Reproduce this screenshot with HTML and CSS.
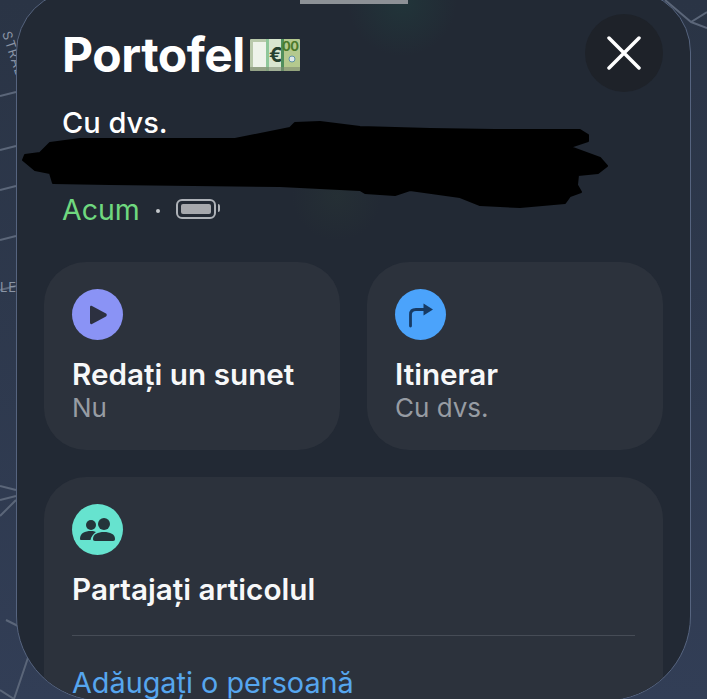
FILE: index.html
```html
<!DOCTYPE html>
<html lang="ro">
<head>
    <meta charset="UTF-8">
    <meta name="viewport" content="width=device-width, initial-scale=1.0">
    <title>Portofel</title>
    <link rel="stylesheet" href="styles.css">
</head>
<body>
    <!-- map behind the sheet -->
    <svg class="map" width="707" height="699" viewBox="0 0 707 699">
        <g fill="none" stroke="#5b6679" stroke-width="2">
            <path d="M0 96L16 92M0 150L16 146M0 190L16 186M0 240L16 236M0 290L16 286"/>
            <path d="M0 486L16 490M0 500L16 496M0 516L16 500M6 620L22 628M34 640L14 699M0 690L14 699"/>
            <path d="M665 0L691 22L707 12M691 22L707 28"/>
        </g>
        <text class="map-label" transform="translate(2 33) rotate(72)">STRAD</text>
        <text class="map-label" x="0" y="292">LE</text>
    </svg>

    <main class="sheet">
        <div class="grabber"></div>

        <header class="sheet-head">
            <div class="head-text">
                <h1 class="title">Portofel
                    <svg class="money" width="50" height="34" viewBox="0 0 50 34">
                        <rect x="0" y="1" width="17" height="32" rx="1" fill="#b9c9ab"/>
                        <rect x="3" y="4" width="13" height="25" fill="#eef3ea"/>
                        <rect x="16" y="1" width="18" height="32" fill="#8fc79a"/>
                        <rect x="19" y="1" width="12" height="32" fill="#d8e6cf"/>
                        <text class="money-sign" x="19" y="24">€</text>
                        <rect x="31" y="1" width="19" height="32" rx="1" fill="#b4c98e"/>
                        <rect x="31" y="1" width="3" height="32" fill="#4f8f5c"/>
                        <text class="money-num" x="32" y="13">00</text>
                        <circle cx="42" cy="21" r="3" fill="#dfe9ea" stroke="#5f93a8"/>
                        <rect x="0" y="29" width="50" height="4" fill="#7d8a70" opacity="0.6"/>
                    </svg>
                </h1>
                <p class="where">Cu dvs.</p>
                <div class="status">
                    <span class="status-now">Acum</span>
                    <span class="status-dot"></span>
                    <span class="battery"><span class="battery-level"></span></span>
                </div>
            </div>
            <button class="close" type="button" aria-label="Închide">
                <svg width="34" height="34" viewBox="0 0 34 34">
                    <path d="M2 2L32 32M32 2L2 32" stroke="#fff" stroke-width="3.500" stroke-linecap="round"/>
                </svg>
            </button>
        </header>

        <section class="actions">
            <div class="card">
                <div class="icon icon-play">
                    <svg width="20" height="20" viewBox="0 0 20 20">
                        <path d="M2 2.2C2 1 3 .5 4 1L18 8.6C19 9.2 19 10.8 18 11.4L4 19C3 19.500 2 19 2 17.800Z" fill="#2c3040"/>
                    </svg>
                </div>
                <div class="card-title">Redați un sunet</div>
                <div class="card-sub">Nu</div>
            </div>
            <div class="card">
                <div class="icon icon-route">
                    <svg width="26" height="26" viewBox="0 0 26 26">
                        <path d="M2.500 24V12.500C2.500 9 4.500 7.500 8 7.500H17" fill="none" stroke="#173a63" stroke-width="2.800" stroke-linecap="round"/>
                        <path d="M15.500 1.500L25 7.500L15.500 13.500Z" fill="#173a63"/>
                    </svg>
                </div>
                <div class="card-title">Itinerar</div>
                <div class="card-sub">Cu dvs.</div>
            </div>
        </section>

        <section class="card share">
            <div class="icon icon-share">
                <svg width="36" height="24" viewBox="0 0 36 24">
                    <circle cx="11" cy="7" r="5" fill="#24343a"/>
                    <path d="M0 21C0 15 5 13 11 13C13 13 15 13.500 16 14C13 16 11 19 10.500 22H2C1 22 0 22 0 21Z" fill="#24343a"/>
                    <circle cx="24" cy="6" r="6" fill="#24343a"/>
                    <path d="M13 21C13 16 18 14 24 14C30 14 35 16 35 21C35 22 34.500 23 33 23H15C13.500 23 13 22 13 21Z" fill="#24343a"/>
                </svg>
            </div>
            <div class="card-title">Partajați articolul</div>
            <hr class="divider">
            <a class="share-add" href="#">Adăugați o persoană</a>
        </section>
    </main>

    <!-- hand-drawn redaction over the address -->
    <svg class="scribble" width="707" height="699" viewBox="0 0 707 699">
        <path d="M23 160L25 155L40 153L50 143L80 139H235L290 128L295 123L320 122L360 127L430 129L495 130L580 130L588 135V141L570 147L600 158L607 166L598 173L578 175L577 185L581 192L570 196L565 203L520 207L480 205L460 197L410 190L395 195L365 193L360 190L280 186L110 184L53 183L50 173L35 170Z" fill="#000" stroke="#000" stroke-width="2" stroke-linejoin="round"/>
    </svg>
</body>
</html>
```

FILE: styles.css
```css
html, body {
    height: 100%;
}
body {
    margin: 0;
    height: 699px;
    position: relative;
    overflow: hidden;
    font-family: 'Inter', 'Liberation Sans', sans-serif;
    background: linear-gradient(to bottom, #2a3445, #323e56);
    color: #fff;
}
.map, .scribble {
    position: absolute;
    left: 0;
    top: 0;
    pointer-events: none;
}
.map-label {
    font-size: 13px;
    letter-spacing: 1px;
    fill: #8a94a5;
}
.sheet {
    position: relative;
    box-sizing: border-box;
    width: 675px;
    height: 711px;
    margin: -10px 0 0 16px;
    padding: 0 27px;
    border: 1px solid #56647f;
    border-radius: 62px 62px 85px 85px;
    background:
        radial-gradient(circle at 385px 10px, rgba(30, 80, 70, 0.3), transparent 55px),
        radial-gradient(circle at 320px 205px, rgba(50, 75, 55, 0.18), transparent 45px),
        #222934;
    overflow: hidden;
}
.grabber {
    position: absolute;
    left: 283px;
    top: 9px;
    width: 108px;
    height: 4px;
    background: #8d9196;
}
.sheet-head {
    display: flex;
    justify-content: space-between;
    align-items: flex-start;
    height: 271px;
    padding: 33px 0 0 18px;
    box-sizing: border-box;
}
.title {
    display: flex;
    align-items: center;
    gap: 5px;
    margin: 0;
    font-size: 48px;
    font-weight: 700;
    line-height: 62px;
    letter-spacing: -0.5px;
}
.where {
    margin: 19px 0 0;
    font-size: 29px;
    font-weight: 500;
    line-height: 36px;
}
.status {
    display: flex;
    align-items: center;
    margin-top: 50px;
    height: 36px;
}
.status-now {
    font-size: 28.500px;
    color: #6fd87f;
}
.status-dot {
    width: 4px;
    height: 4px;
    margin: 4px 16px 0;
    border-radius: 50%;
    background: #c4c8cc;
}
.battery {
    position: relative;
    box-sizing: border-box;
    width: 40px;
    height: 20px;
    padding: 3px;
    border: 2px solid #aeb2b8;
    border-radius: 6px;
}
.battery::after {
    content: '';
    position: absolute;
    right: -6px;
    top: 3px;
    width: 2px;
    height: 8px;
    border-radius: 0 2px 2px 0;
    background: #aeb2b8;
}
.battery-level {
    display: block;
    height: 100%;
    border-radius: 2px;
    background: #a6a8ad;
}
.close {
    display: flex;
    align-items: center;
    justify-content: center;
    flex: none;
    width: 78px;
    height: 78px;
    margin: -10px 0 0;
    padding: 0;
    border: none;
    border-radius: 50%;
    background: #1e2229;
}
.actions {
    display: grid;
    grid-template-columns: 296px 296px;
    gap: 27px;
}
.card {
    box-sizing: border-box;
    height: 188px;
    padding: 27px 28px 0;
    border-radius: 42px;
    background: #2c323c;
}
.icon {
    display: flex;
    align-items: center;
    justify-content: center;
    width: 51px;
    height: 51px;
    border-radius: 50%;
}
.icon-play {
    background: #8a93f5;
}
.icon-route {
    background: #4ba3fb;
}
.icon-share {
    background: #66e3cf;
}
.card-title {
    margin-top: 16px;
    font-size: 29.700px;
    font-weight: 600;
    line-height: 36px;
    color: #f7f8f9;
}
.card-sub {
    margin-top: 0;
    font-size: 26px;
    line-height: 32px;
    color: #979ca3;
}
.share {
    height: 260px;
    margin-top: 27px;
}
.divider {
    height: 1px;
    margin: 28px 0 0;
    border: none;
    background: #464c56;
}
.share-add {
    display: block;
    margin-top: 29px;
    font-size: 28.800px;
    line-height: 36px;
    color: #56a6ee;
    text-decoration: none;
}
.money {
    flex: none;
}
.money-sign {
    font-size: 20px;
    font-weight: 700;
    fill: #24402e;
}
.money-num {
    font-size: 13px;
    fill: #4c7a2c;
}
```
